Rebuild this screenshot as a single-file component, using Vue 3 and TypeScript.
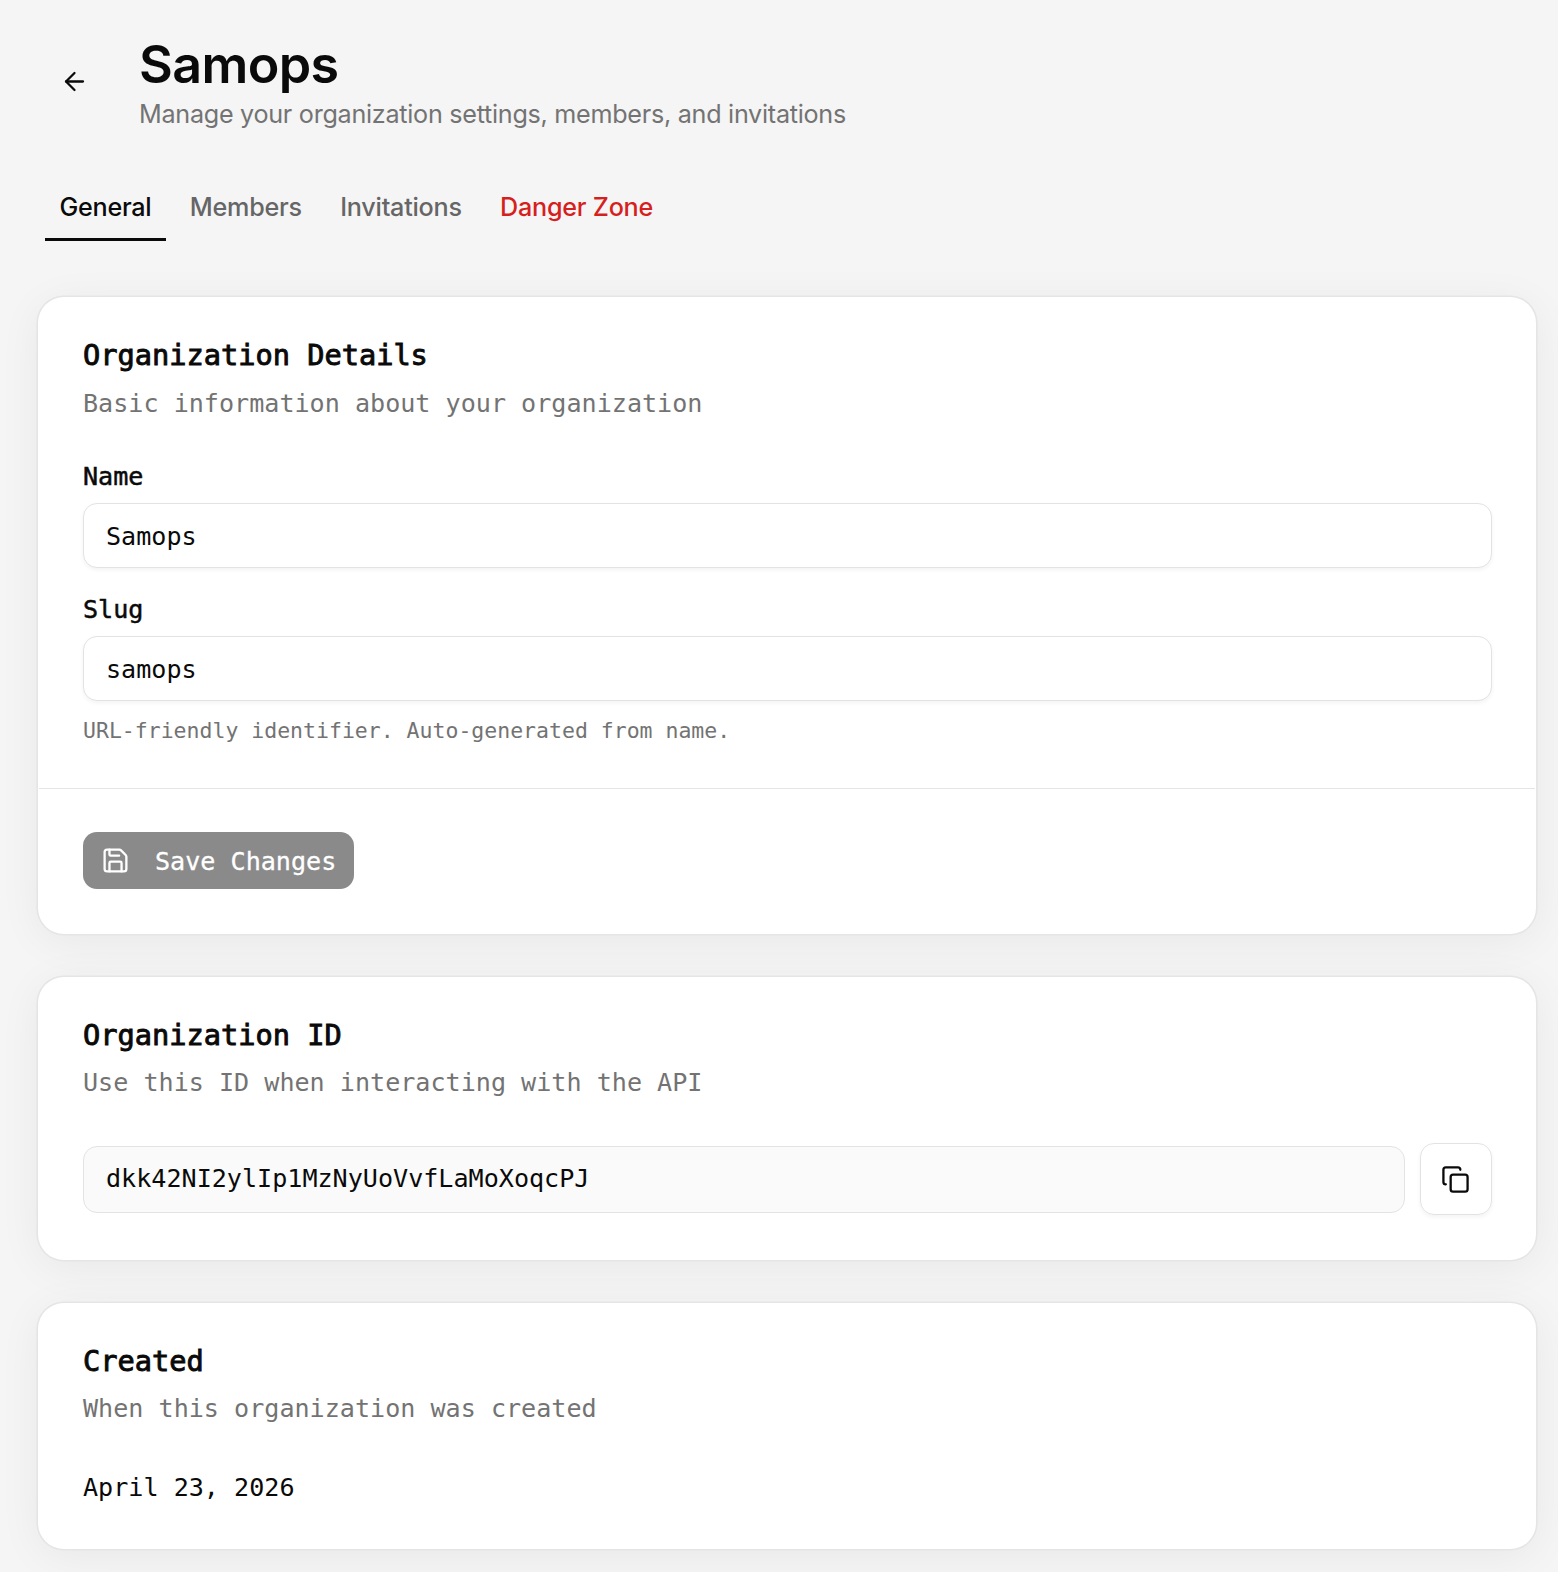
<script setup lang="ts">
import { ref } from 'vue'

interface Tab {
  id: string
  label: string
  danger?: boolean
}

const tabs: Tab[] = [
  { id: 'general', label: 'General' },
  { id: 'members', label: 'Members' },
  { id: 'invitations', label: 'Invitations' },
  { id: 'danger', label: 'Danger Zone', danger: true },
]

const activeTab = ref('general')
const name = ref('Samops')
const slug = ref('samops')
const organizationId = 'dkk42NI2ylIp1MzNyUoVvfLaMoXoqcPJ'
</script>

<template>
  <main class="page">
    <header class="header">
      <button class="back" type="button" aria-label="Back">
        <svg class="icon" viewBox="0 0 24 24">
          <path d="m12 19-7-7 7-7" />
          <path d="M19 12H5" />
        </svg>
      </button>
      <div class="heading">
        <h1>Samops</h1>
        <p>Manage your organization settings, members, and invitations</p>
      </div>
    </header>

    <nav class="tabs">
      <button
        v-for="tab in tabs"
        :key="tab.id"
        type="button"
        :class="['tab', { active: tab.id === activeTab, danger: tab.danger }]"
        @click="activeTab = tab.id"
      >
        {{ tab.label }}
      </button>
    </nav>

    <section class="card details">
      <h2>Organization Details</h2>
      <p class="desc">Basic information about your organization</p>
      <label class="first" for="name">Name</label>
      <input id="name" v-model="name" type="text" />
      <label for="slug">Slug</label>
      <input id="slug" v-model="slug" type="text" />
      <p class="hint">URL-friendly identifier. Auto-generated from name.</p>
      <footer class="footer">
        <button class="save" type="button">
          <svg class="icon" viewBox="0 0 24 24">
            <path d="M15.2 3a2 2 0 0 1 1.4.6l3.8 3.8a2 2 0 0 1 .6 1.4V19a2 2 0 0 1-2 2H5a2 2 0 0 1-2-2V5a2 2 0 0 1 2-2z" />
            <path d="M17 21v-7a1 1 0 0 0-1-1H8a1 1 0 0 0-1 1v7" />
            <path d="M7 3v4a1 1 0 0 0 1 1h7" />
          </svg>
          <span>Save Changes</span>
        </button>
      </footer>
    </section>

    <section class="card">
      <h2>Organization ID</h2>
      <p class="desc">Use this ID when interacting with the API</p>
      <div class="id-row">
        <code>{{ organizationId }}</code>
        <button class="copy" type="button" aria-label="Copy">
          <svg class="icon" viewBox="0 0 24 24">
            <rect x="8" y="8" width="14" height="14" rx="2" />
            <path d="M4 16c-1.1 0-2-.9-2-2V4c0-1.1.9-2 2-2h10c1.1 0 2 .9 2 2" />
          </svg>
        </button>
      </div>
    </section>

    <section class="card created">
      <h2>Created</h2>
      <p class="desc">When this organization was created</p>
      <p class="date">April 23, 2026</p>
    </section>
  </main>
</template>

<style>
body {
  background: #f5f5f5;
}
</style>

<style scoped>
* {
  box-sizing: border-box;
}
.page {
  height: 1572px;
  overflow: hidden;
  padding: 34px 22px 0 38px;
  color: #0a0a0a;
  font-family: 'DejaVu Sans Mono', monospace;
  font-size: 25.1px;
}
h1,
h2,
p {
  margin: 0;
}
button {
  margin: 0;
  padding: 0;
  border: 0;
  background: none;
  color: inherit;
  font: inherit;
}
.icon {
  display: block;
  width: 29px;
  height: 29px;
  flex: none;
  fill: none;
  stroke: currentColor;
  stroke-width: 1.9;
  stroke-linecap: round;
  stroke-linejoin: round;
}
.header {
  display: flex;
  height: 98px;
  font-family: Inter, sans-serif;
}
.back {
  display: flex;
  align-items: center;
  justify-content: center;
  width: 72px;
  height: 95px;
  margin-right: 29px;
}
.heading h1 {
  padding-top: 1px;
  font-size: 52px;
  line-height: 60px;
  font-weight: 600;
  letter-spacing: -0.6px;
}
.heading p {
  margin-top: 1px;
  color: #737373;
  font-size: 25.17px;
  line-height: 36px;
  letter-spacing: -0.275px;
}
.tabs {
  display: flex;
  gap: 9.6px;
  margin: 47px 0 56px 7px;
  font-family: Inter, sans-serif;
}
.tab {
  height: 62px;
  padding: 10px 14.4px 13px;
  border-bottom: 3px solid transparent;
  color: #666;
  font-size: 25.17px;
  font-weight: 500;
  line-height: 36px;
  letter-spacing: -0.24px;
  white-space: nowrap;
}
.tab.active {
  border-color: #0a0a0a;
  color: #0a0a0a;
}
.tab.danger {
  color: #d61f1f;
}
.card {
  margin-bottom: 43px;
  padding: 40px 44px 45px 45px;
  border-radius: 26px;
  background: #fff;
  box-shadow:
    0 0 0 1.6px #e5e5e5,
    0 7px 44px rgba(0, 0, 0, 0.06);
}
h2 {
  font-size: 28.65px;
  font-weight: 400;
  line-height: 36px;
  -webkit-text-stroke: 0.9px currentColor;
}
.desc {
  margin-top: 12px;
  color: #737373;
  line-height: 36px;
}
.details .desc {
  margin-top: 13px;
}
label {
  display: block;
  margin: 29px 0 13px;
  line-height: 26px;
  -webkit-text-stroke: 0.5px currentColor;
}
label.first {
  margin-top: 42px;
}
input {
  display: block;
  width: 100%;
  height: 65px;
  padding: 2px 22px 0;
  border: 1px solid #e3e3e3;
  border-radius: 14px;
  outline: 0;
  background: #fff;
  box-shadow: 0 2px 4px rgba(0, 0, 0, 0.05);
  color: inherit;
  font: inherit;
}
.hint {
  margin-top: 15px;
  color: #737373;
  font-size: 21.5px;
  line-height: 30px;
}
.footer {
  margin: 42px -43px 0 -44px;
  padding: 43px 43px 0 44px;
  border-top: 1px solid #e5e5e5;
}
.save {
  display: flex;
  align-items: center;
  gap: 25px;
  width: 271px;
  height: 57px;
  padding-left: 18px;
  border-radius: 14px;
  background: #8a8a8a;
  color: #fff;
  white-space: nowrap;
}
.save span {
  padding-top: 2px;
  -webkit-text-stroke: 0.3px currentColor;
}
.id-row {
  display: flex;
  align-items: center;
  gap: 15px;
  margin-top: 42px;
}
code {
  flex: 1;
  height: 67px;
  padding: 0 22px;
  border: 1px solid #e3e3e3;
  border-radius: 14px;
  background: #fafafa;
  font: inherit;
  line-height: 63px;
}
.copy {
  display: flex;
  align-items: center;
  justify-content: center;
  width: 72px;
  height: 72px;
  padding-right: 1px;
  border: 1px solid #e3e3e3;
  border-radius: 14px;
  box-shadow: 0 2px 4px rgba(0, 0, 0, 0.05);
}
.created {
  padding-bottom: 43px;
}
.date {
  margin-top: 43px;
  line-height: 36px;
}
</style>
